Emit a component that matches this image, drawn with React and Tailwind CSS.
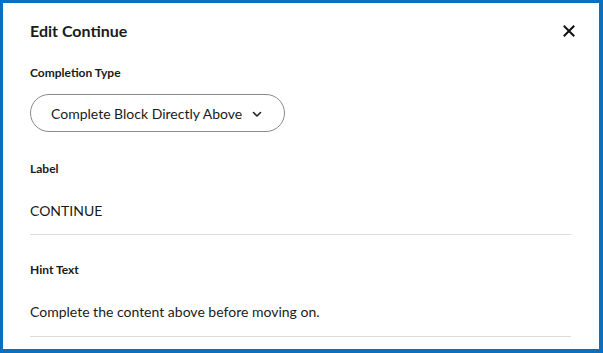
export default function App() {
  return (
    <div className="w-[603px] h-[353px] bg-[#0b6fbf] pt-[3px] pl-[3px] pr-[4px] pb-[4px] font-['Lato','Noto_Sans',sans-serif] text-[#1a1a1a]">
      <div className="h-full bg-white pl-[27px] pr-[28px] pt-[17px]">
        <div className="flex items-center justify-between h-[22px]">
          <h2 className="text-[16px] font-bold">Edit Continue</h2>
          <button className="w-[16px] h-[16px] flex items-center justify-center mr-[-6px]">
            <svg width="12" height="12" viewBox="0 0 12 12" fill="none" stroke="#111" strokeWidth="2" strokeLinecap="square">
              <path d="M1.5 1.5 L10.5 10.5 M10.5 1.5 L1.5 10.5" />
            </svg>
          </button>
        </div>

        <div className="mt-[23px] text-[12px] font-bold leading-[16px]">Completion Type</div>
        <button className="mt-[13px] flex items-center h-[38px] w-[255px] rounded-full border border-[#8a8a8a] pl-[20px] text-[14px] whitespace-nowrap">
          <span>Complete Block Directly Above</span>
          <svg className="ml-[10px] mt-[2px] shrink-0" width="10" height="7" viewBox="0 0 10 7" fill="none" stroke="#222" strokeWidth="1.6" strokeLinecap="round" strokeLinejoin="round">
            <path d="M1.5 1.5 L5 5 L8.5 1.5" />
          </svg>
        </button>

        <div className="mt-[29px] text-[12px] font-bold leading-[16px]">Label</div>
        <div className="mt-[24px] text-[14px] leading-[20px]">CONTINUE</div>
        <div className="mt-[13px] h-px bg-[#dcdcdc]" />

        <div className="mt-[27px] text-[12px] font-bold leading-[16px]">Hint Text</div>
        <div className="mt-[24px] text-[14px] leading-[20px]">Complete the content above before moving on.</div>
        <div className="mt-[14px] h-px bg-[#dcdcdc]" />
      </div>
    </div>
  );
}
